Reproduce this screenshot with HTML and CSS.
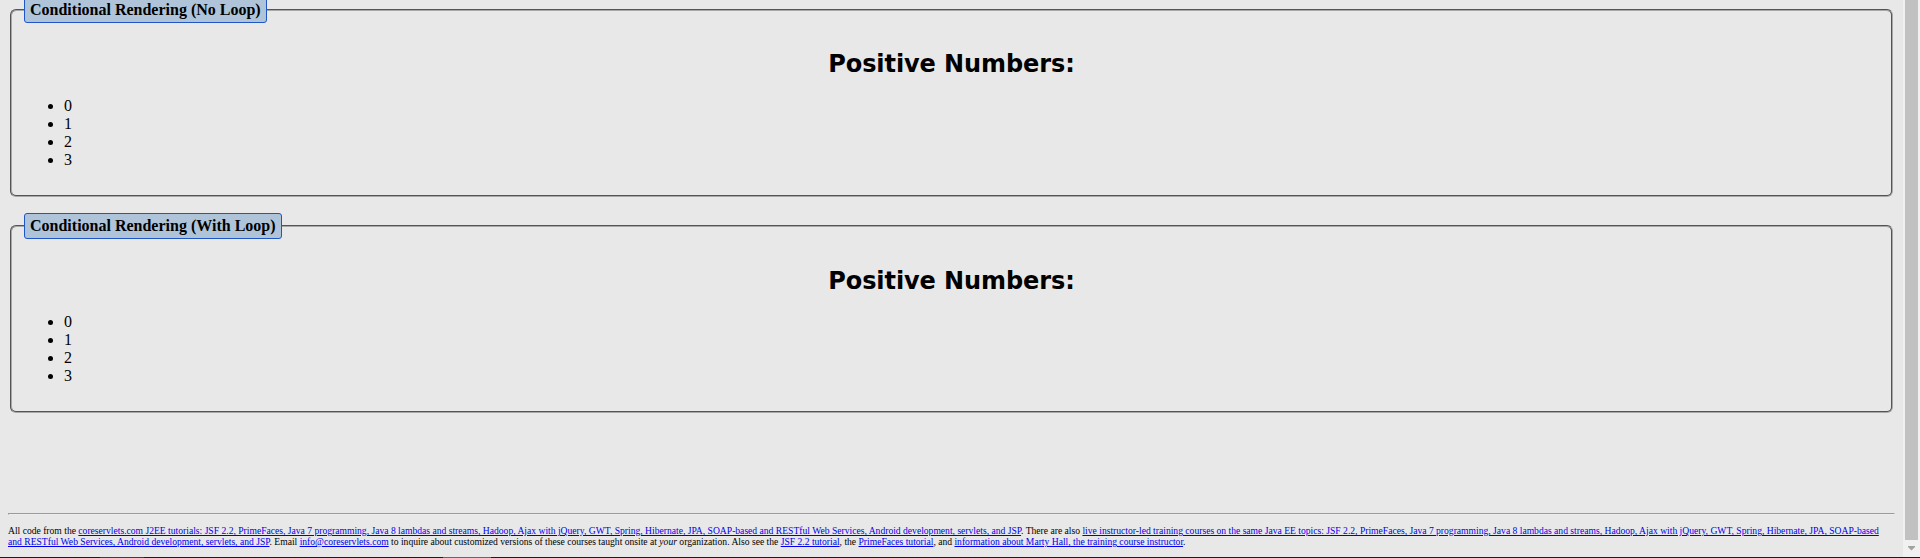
FILE: index.html
```
<!DOCTYPE html>
<html lang="en">
<head>
<meta charset="utf-8">
<title>Conditional Rendering</title>
<link rel="stylesheet" href="styles.css">
</head>
<body>
<div class="screen">
<main class="page">
<fieldset class="panel">
<legend class="panel-title">Conditional Rendering (No Loop)</legend>
<h2 class="heading">Positive Numbers:</h2>
<ul class="numbers"><li>0</li><li>1</li><li>2</li><li>3</li></ul>
</fieldset>
<fieldset class="panel">
<legend class="panel-title">Conditional Rendering (With Loop)</legend>
<h2 class="heading loop">Positive Numbers:</h2>
<ul class="numbers"><li>0</li><li>1</li><li>2</li><li>3</li></ul>
</fieldset>
<hr class="rule">
<footer class="footer">All code from the <a href="#">coreservlets.com J2EE tutorials: JSF 2.2, PrimeFaces, Java 7 programming, Java 8 lambdas and streams, Hadoop, Ajax with jQuery, GWT, Spring, Hibernate, JPA, SOAP-based and RESTful Web Services, Android development, servlets, and JSP</a>. There are also <a href="#">live instructor-led training courses on the same Java EE topics: JSF 2.2, PrimeFaces, Java 7 programming, Java 8 lambdas and streams, Hadoop, Ajax with jQuery, GWT, Spring, Hibernate, JPA, SOAP-based<br>and RESTful Web Services, Android development, servlets, and JSP</a>. Email <a href="#">info@coreservlets.com</a> to inquire about customized versions of these courses taught onsite at <i>your</i> organization. Also see the <a href="#">JSF 2.2 tutorial</a>, the <a href="#">PrimeFaces tutorial</a>, and <a href="#">information about Marty Hall, the training course instructor</a>.</footer>
</main>
<div class="scrollbar"><div class="thumb"></div><svg class="arrow" width="17" height="17" viewBox="0 0 17 17"><path d="M5 6h7v1l-3.500 3.500L5 7z" fill="#a3a3a3"/></svg></div>
</div>
<div class="edge"><span class="tab"></span><span class="tab active"></span></div>
</body>
</html>
```
FILE: styles.css
```
html, body { margin: 0; height: 558px; overflow: hidden; }
body { display: flex; flex-direction: column; background: #e8e8e8; color: #000; font-family: "Liberation Serif", "Times New Roman", serif; font-size: 16px; }
.screen { display: flex; flex: 1; min-height: 0; }
.page { flex: 1; margin-top: -3px; padding: 0 8px; min-width: 0; }
.panel { box-sizing: border-box; height: 200px; margin: 0 2px 16px; padding: 6px 12px 10px; border: 2px solid; border-style: groove; border-color: #a8a8a8; border-radius: 6px; }
.panel-title { box-sizing: border-box; height: 26px; padding: 3px 5px; border: 1px solid #1e56c5; border-radius: 3px; background: #afc4d9; font-weight: bold; line-height: 18px; }
.heading { margin: 21px 0 19px; text-align: center; font: bold 24px/28px "DejaVu Sans", sans-serif; letter-spacing: -0.08px; }
.loop { margin: 22px 0 18px; }
.numbers { margin: 0; padding-left: 40px; line-height: 18px; }
.rule { margin: 100px 0 0; border: 1px solid; border-color: #9a9a9a #ededed #ededed #9a9a9a; }
.footer { margin-top: 10px; font-size: 9.605px; line-height: 11px; white-space: nowrap; }
.footer a { color: #0000ee; }
.scrollbar { display: flex; flex-direction: column; width: 17px; background: #f1f1f1; }
.thumb { flex: 1; background: #c1c1c1; margin: 0 2px; }
.edge { display: flex; gap: 299px; height: 1px; padding-left: 100px; background: #1b1b1f; }
.tab { width: 44px; background: #3c3c3c; }
.active { width: 48px; background: #9a5a25; }
```
